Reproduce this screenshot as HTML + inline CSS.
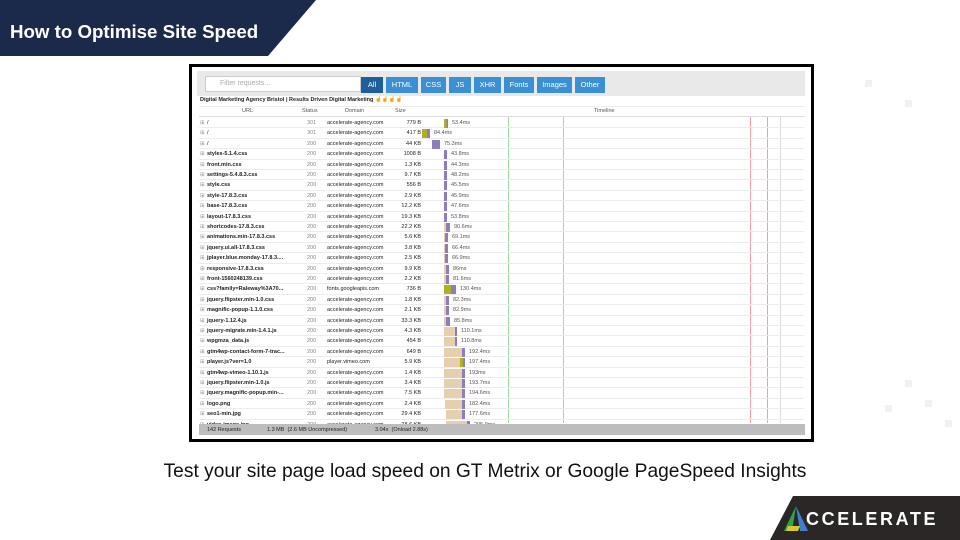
<!DOCTYPE html>
<html><head><style>
*{margin:0;padding:0;box-sizing:border-box}
body{width:960px;height:540px;background:#fff;position:relative;overflow:hidden;font-family:"Liberation Sans",sans-serif}
.ban{position:absolute;left:0;top:0;width:316px;height:56px;background:#1b2a4a;clip-path:polygon(0 0,316px 0,268px 56px,0 56px)}
.ban span{position:absolute;left:10px;top:21px;color:#fff;font-weight:bold;font-size:18.7px}
.frame{position:absolute;left:189px;top:64px;width:625px;height:378px;border:3px solid #000;background:#fff}
.tb{position:absolute;left:5px;top:4px;width:608px;height:25px;background:#e9e9e9}
.filt{position:absolute;left:8px;top:5px;width:156px;height:16px;background:#fff;border:1px solid #ccc;font-size:7px;color:#aaa;padding:3px 0 0 14px}
.btn{position:absolute;top:6px;height:16px;background:#3b8fd4;color:#fff;font-size:7.5px;text-align:center;line-height:16px}
.t{position:absolute;font-size:5.5px;color:#222;white-space:nowrap}
.row{position:absolute;left:7px;width:605px;height:10.4px;border-bottom:1px solid #ececec}
.row .t{top:2px}
.foot{position:absolute;left:7px;top:357px;width:606px;height:11px;background:#bdbdbd}
.vl{position:absolute;top:50px;height:306px;width:1px}
.c{position:absolute;font-size:19.2px;color:#111;left:0;width:970px;text-align:center;top:461px}
.logo{position:absolute;left:770px;top:496px;width:190px;height:44px;background:#2b2727;clip-path:polygon(23px 0,190px 0,190px 44px,0 44px)}
.logo span{position:absolute;left:36px;top:13px;color:#fff;font-size:18px;font-weight:bold;letter-spacing:2.6px}
.sq{position:absolute;background:#f1f1f1;width:7px;height:7px}
</style></head><body>
<div class="ban"><span>How to Optimise Site Speed</span></div>
<div class="sq" style="left:905px;top:380px"></div><div class="sq" style="left:925px;top:400px"></div><div class="sq" style="left:885px;top:405px"></div><div class="sq" style="left:945px;top:420px"></div><div class="sq" style="left:865px;top:80px"></div><div class="sq" style="left:905px;top:100px"></div>
<div class="frame">
<div class="tb">
<div class="filt">Filter requests...</div>
<div class="btn" style="left:164px;width:22px;background:#1d5f9a">All</div>
<div class="btn" style="left:189px;width:32px">HTML</div>
<div class="btn" style="left:224px;width:25px">CSS</div>
<div class="btn" style="left:252px;width:22px">JS</div>
<div class="btn" style="left:277px;width:27px">XHR</div>
<div class="btn" style="left:307px;width:30px">Fonts</div>
<div class="btn" style="left:340px;width:35px">Images</div>
<div class="btn" style="left:378px;width:30px">Other</div>
</div>
<div class="t" style="left:8px;top:30px;font-weight:bold">Digital Marketing Agency Bristol | Results Driven Digital Marketing <span style="color:#c9b400">☝☝☝☝</span></div>
<div style="position:absolute;left:7px;top:39px;width:606px;height:11px;border-bottom:1px solid #ddd;border-top:1px solid #eee"></div>
<div class="t" style="left:50px;top:41px;color:#555">URL</div>
<div class="t" style="left:110px;top:41px;color:#555">Status</div>
<div class="t" style="left:153px;top:41px;color:#555">Domain</div>
<div class="t" style="left:203px;top:41px;color:#555">Size</div>
<div class="t" style="left:402px;top:41px;color:#555">Timeline</div>
<div class="vl" style="left:316px;background:#9bd99b"></div>
<div class="vl" style="left:371px;background:#a8c8e8"></div>
<div class="vl" style="left:558px;background:#f0a0a0"></div>
<div class="vl" style="left:575px;background:#f0a0a0"></div>
<div class="vl" style="left:588px;background:#ddd"></div>
<div id="rows"></div>
<div class="foot"><span class="t" style="left:8px;top:3px">142 Requests</span><span class="t" style="left:68px;top:3px">1.3 MB &nbsp;(2.6 MB Uncompressed)</span><span class="t" style="left:176px;top:3px">3.04s &nbsp;(Onload 2.88s)</span></div>
</div>
<div class="c">Test your site page load speed on GT Metrix or Google PageSpeed Insights</div>
<div class="logo"><svg style="position:absolute;left:12px;top:8px" width="30" height="30" viewBox="0 0 30 30"><polygon points="14,2 2,27 10,27" fill="#2aa84a"/><polygon points="14,2 26,27 18,27" fill="#3f7fd0"/><polygon points="6,22 18,22 16,27 4,27" fill="#d9c92a"/></svg><span>CCELERATE</span></div>
<script>
var d=[["/","301","accelerate-agency.com","779 B",252,0,4,"53.4ms",1],
["/","301","accelerate-agency.com","417 B",230,0,8,"84.4ms",1],
["/","200","accelerate-agency.com","44 KB",240,0,8,"75.3ms",0],
["styles-5.1.4.css","200","accelerate-agency.com","1008 B",252,0,3,"43.8ms"],
["front.min.css","200","accelerate-agency.com","1.3 KB",252,0,3,"44.3ms"],
["settings-5.4.8.3.css","200","accelerate-agency.com","9.7 KB",252,0,3,"48.2ms"],
["style.css","200","accelerate-agency.com","556 B",252,0,3,"45.5ms"],
["style-17.8.3.css","200","accelerate-agency.com","2.9 KB",252,0,3,"45.9ms"],
["base-17.8.3.css","200","accelerate-agency.com","12.2 KB",252,0,3,"47.6ms"],
["layout-17.8.3.css","200","accelerate-agency.com","19.3 KB",252,0,3,"53.8ms"],
["shortcodes-17.8.3.css","200","accelerate-agency.com","22.2 KB",252,2,4,"90.6ms"],
["animations.min-17.8.3.css","200","accelerate-agency.com","5.6 KB",252,1,3,"69.1ms"],
["jquery.ui.all-17.8.3.css","200","accelerate-agency.com","3.8 KB",252,1,3,"66.4ms"],
["jplayer.blue.monday-17.8.3....","200","accelerate-agency.com","2.5 KB",252,1,3,"66.9ms"],
["responsive-17.8.3.css","200","accelerate-agency.com","9.9 KB",252,2,3,"86ms"],
["front-1560248139.css","200","accelerate-agency.com","2.2 KB",252,2,3,"81.6ms"],
["css?family=Raleway%3A70...","200","fonts.googleapis.com","736 B",252,0,12,"130.4ms",1],
["jquery.flipster.min-1.0.css","200","accelerate-agency.com","1.8 KB",252,2,3,"82.3ms"],
["magnific-popup-1.1.0.css","200","accelerate-agency.com","2.1 KB",252,2,3,"82.9ms"],
["jquery-1.12.4.js","200","accelerate-agency.com","33.3 KB",252,2,4,"85.8ms"],
["jquery-migrate.min-1.4.1.js","200","accelerate-agency.com","4.3 KB",252,11,2,"110.1ms"],
["wpgmza_data.js","200","accelerate-agency.com","454 B",252,11,2,"110.8ms"],
["gtm4wp-contact-form-7-trac...","200","accelerate-agency.com","649 B",252,18,3,"192.4ms"],
["player.js?ver=1.0","200","player.vimeo.com","5.9 KB",252,16,5,"197.4ms",1],
["gtm4wp-vimeo-1.10.1.js","200","accelerate-agency.com","1.4 KB",252,18,3,"193ms"],
["jquery.flipster.min-1.0.js","200","accelerate-agency.com","3.4 KB",252,18,3,"193.7ms"],
["jquery.magnific-popup.min-...","200","accelerate-agency.com","7.5 KB",252,18,3,"194.6ms"],
["logo.png","200","accelerate-agency.com","2.4 KB",253,17,3,"182.4ms"],
["seo1-min.jpg","200","accelerate-agency.com","29.4 KB",254,16,3,"177.6ms"],
["video-image.jpg","200","accelerate-agency.com","28.6 KB",254,21,3,"205.9ms"]];
var h="";d.forEach(function(r,i){var y=51+i*10.4;var x=r[4];
h+='<div class="row" style="top:'+y+'px"><span class="t" style="left:1px;color:#999">⊞</span><span class="t" style="left:8px;font-weight:'+(i<3?'normal':'bold')+'">'+r[0]+'</span><span class="t" style="left:108px;color:#888">'+r[1]+'</span><span class="t" style="left:128px">'+r[2]+'</span><span class="t" style="left:188px;width:34px;text-align:right">'+r[3]+'</span>'+
(r[5]?'<div style="position:absolute;top:1px;height:9px;left:'+(x-7)+'px;width:'+r[5]+'px;background:#e6cfae"></div>':'')+
'<div style="position:absolute;top:1px;height:9px;left:'+(x-7+r[5])+'px;width:'+r[6]+'px;background:'+(r[8]?'linear-gradient(90deg,#b0b020 60%,#8d7cc0 60%)':'#8d7cc0')+'"></div><span class="t" style="left:'+(x-7+r[5]+r[6]+4)+'px;color:#555">'+r[7]+'</span></div>';});
document.getElementById("rows").innerHTML=h;
</script>
</body></html>
